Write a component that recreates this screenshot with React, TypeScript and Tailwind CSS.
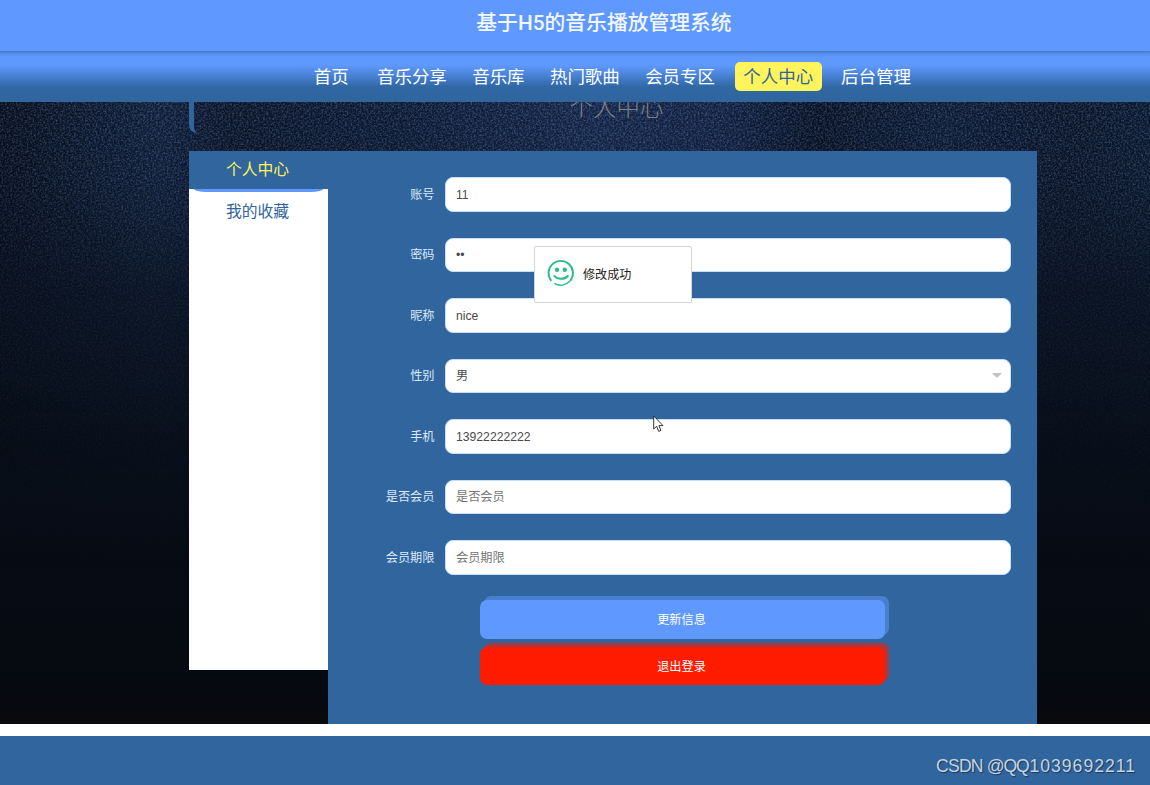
import React from 'react';
import clsx from 'clsx';

const NAV = [
  { label: '首页', cls: 'mr-[11px]' },
  { label: '音乐分享', cls: 'mr-[8px]' },
  { label: '音乐库', cls: 'mr-[8px]' },
  { label: '热门歌曲', cls: 'mr-[8px]' },
  { label: '会员专区', cls: 'mr-[11px]' },
  { label: '个人中心', cls: 'mr-[10.5px]', active: true },
  { label: '后台管理', cls: '' },
];

const FIELDS = [
  { label: '账号', value: '11' },
  { label: '密码', value: '••' },
  { label: '昵称', value: 'nice' },
  { label: '性别', value: '男', select: true },
  { label: '手机', value: '13922222222' },
  { label: '是否会员', placeholder: '是否会员' },
  { label: '会员期限', placeholder: '会员期限' },
];

// dark textured wall behind the page
function Backdrop() {
  return (
    <svg className="absolute inset-0 h-full w-full" viewBox="0 0 1150 622" preserveAspectRatio="none">
      <defs>
        <linearGradient id="wall" x1="0" y1="0" x2="1" y2="0">
          <stop offset="0" stopColor="#0c1420" />
          <stop offset="0.08" stopColor="#14233a" />
          <stop offset="0.14" stopColor="#1a2e4c" />
          <stop offset="0.2" stopColor="#121e33" />
          <stop offset="0.35" stopColor="#162743" />
          <stop offset="0.52" stopColor="#213963" />
          <stop offset="0.63" stopColor="#1d3157" />
          <stop offset="0.71" stopColor="#0f1a2d" />
          <stop offset="0.82" stopColor="#172945" />
          <stop offset="0.93" stopColor="#121e33" />
          <stop offset="1" stopColor="#13253c" />
        </linearGradient>
        <linearGradient id="fade" x1="0" y1="0" x2="0" y2="1">
          <stop offset="0" stopColor="#fff" />
          <stop offset="0.12" stopColor="#ddd" />
          <stop offset="0.3" stopColor="#555" />
          <stop offset="0.55" stopColor="#181818" />
          <stop offset="0.75" stopColor="#000" />
        </linearGradient>
        <linearGradient id="dark" x1="0" y1="0" x2="0" y2="1">
          <stop offset="0" stopColor="#0b1424" />
          <stop offset="0.5" stopColor="#070e18" />
          <stop offset="0.95" stopColor="#060910" />
          <stop offset="1" stopColor="#0b090c" />
        </linearGradient>
        <filter id="grain" x="0" y="0" width="100%" height="100%" colorInterpolationFilters="sRGB">
          <feTurbulence type="fractalNoise" baseFrequency="0.55" numOctaves="3" seed="4" />
          <feColorMatrix values="1.1 0 0 0 -0.46  1.1 0 0 0 -0.41  1.3 0 0 0 -0.4  0 0 0 0 0.38" />
        </filter>
        <mask id="fadeMask">
          <rect width="1150" height="622" fill="url(#fade)" />
        </mask>
      </defs>
      <rect width="1150" height="622" fill="url(#dark)" />
      <g mask="url(#fadeMask)">
        <rect width="1150" height="622" fill="url(#wall)" />
        <rect width="1150" height="622" filter="url(#grain)" />
      </g>
    </svg>
  );
}

function Toast() {
  return (
    <div className="absolute left-[534px] top-[246px] z-20 flex h-[57px] w-[158px] items-center rounded-[2px] border border-[#d3d4d3] bg-white pl-[12px]">
      <svg width="28" height="28" viewBox="0 0 28 28" fill="none" stroke="#2bbd85" className="mt-[-3px]">
        <path d="M4.4 21.9A12.2 12.2 0 1 1 23 22" strokeWidth="1.9" />
        <path d="M7.3 24.4A12.2 12.2 0 0 0 23 22" strokeWidth="1.3" />
        <path d="M7.4 17C10.4 20.8 17.6 20.8 20.8 17" strokeWidth="2" strokeLinecap="round" />
        <circle cx="10" cy="10.8" r="2.2" fill="#2bbd85" stroke="none" />
        <circle cx="17.8" cy="10.8" r="2.2" fill="#2bbd85" stroke="none" />
      </svg>
      <span className="ml-[8px] pt-[2px] text-[12.1px] text-[#222]">修改成功</span>
    </div>
  );
}

export default function App() {
  return (
    <div className="relative flex h-[785px] w-[1150px] flex-col overflow-hidden bg-white font-['Liberation_Sans','Noto_Sans_CJK_SC',sans-serif]">
      {/* Header */}
      <header className="flex h-[51px] items-center justify-center bg-[#5f99ff] pb-[4px] pl-[58px]">
        <h1 className="font-['Roboto','Noto_Sans_CJK_SC',sans-serif] text-[20.8px] font-medium leading-none text-[#f2f7ff]">
          基于H5的音乐播放管理系统
        </h1>
      </header>

      <nav className="flex h-[51px] items-center bg-[linear-gradient(180deg,#4479c8_0px,#5790ee_3px,#5f99ff_6px,#5f99ff_14px,#3068a4_36px,#30659d_51px)] pl-[305px]">
        {NAV.map((item) => (
          <a
            key={item.label}
            className={clsx(
              'flex h-[29px] items-center whitespace-nowrap rounded-[5px] px-[8.7px] pt-[2px] text-[17.47px] leading-none',
              item.active ? 'bg-[#fff45c] text-[#30659d]' : 'text-white',
              item.cls
            )}
          >
            {item.label}
          </a>
        ))}
      </nav>

      {/* Content */}
      <main className="relative h-[622px] overflow-hidden">
        <Backdrop />
        <div className="relative ml-[189px] w-[848px]">
          <h2 className="h-[31px] rounded-bl-[8px] border-l-[5px] border-[#30659d] pl-[2px] text-center text-[23.4px] font-light leading-[13px] text-[#8b8d8f]/90">
            个人中心
          </h2>
          <div className="mt-[18px] flex items-start">
            <aside className="h-[519px] w-[139px] bg-white text-center text-[15.8px]">
              <div className="h-[38px] bg-[#30659d] pr-[2px] leading-[37px] text-[#fff45c]">个人中心</div>
              <div className="mx-[5px] h-[3px] rounded-b-[12px_3px] bg-[#5f99ff]" />
              <div className="pr-[2px] leading-[40px] text-[#30659d]">我的收藏</div>
            </aside>
            <form className="flex h-[573px] w-[709px] flex-col bg-[#30659d] pt-[26px]">
              <div className="flex flex-col gap-[26px]">
                {FIELDS.map((f) => (
                  <div key={f.label} className="flex h-[34.5px] items-center">
                    <label className="w-[106.5px] pt-px text-right text-[12.2px] text-[#dbe9fa]">{f.label}</label>
                    <div className="ml-[10.5px] flex h-full w-[566px] items-center justify-between rounded-[8px] border border-[#c8def2] bg-white pl-[10px] pr-[8px]">
                      <span className={clsx('pt-px text-[12.2px]', f.placeholder ? 'text-[#757575]' : 'text-[#4a4a4a]')}>
                        {f.value ?? f.placeholder}
                      </span>
                      {f.select && (
                        <svg width="10" height="5" viewBox="0 0 10 5">
                          <path d="M0 0H10L5 5Z" fill="#c2c2c2" />
                        </svg>
                      )}
                    </div>
                  </div>
                ))}
              </div>
              <div className="ml-[152px] mt-[25.5px] flex w-[405px] flex-col gap-[8px] text-[12.2px] text-white">
                <button type="button" className="h-[38.5px] rounded-[7px] bg-[#5f99ff] pr-[2px] pt-px shadow-[4px_-4px_0_rgba(95,153,255,0.5)]">
                  更新信息
                </button>
                <button type="button" className="h-[38.5px] rounded-[7px] bg-[#ff1b00] pr-[2px] pt-[2px] shadow-[4px_-4px_0_rgba(255,27,0,0.6)]">
                  退出登录
                </button>
              </div>
            </form>
          </div>
        </div>
      </main>

      {/* Footer */}
      <footer className="mt-[12px] flex h-[49px] justify-end bg-[#30659d] pr-[14px] pt-[19px]">
        <p className="whitespace-nowrap text-[17.6px] leading-[22px] text-[#c6d3e0] [text-shadow:1px_1px_1px_#1d3a5c]">
          <span className="tracking-[-0.8px]">CSDN </span>
          <span className="tracking-[-1.2px]">@QQ</span>
          <span className="ml-px tracking-[1px]">1039692211</span>
        </p>
      </footer>

      <Toast />
      <svg className="absolute left-[653px] top-[415px] z-20" width="11" height="18" viewBox="0 0 11 18">
        <path d="M0.7 1V14L3.6 11.3L5.7 16.4L8 15.4L5.9 10.6H10Z" fill="#fff" stroke="#222" strokeWidth="0.9" />
      </svg>
    </div>
  );
}
